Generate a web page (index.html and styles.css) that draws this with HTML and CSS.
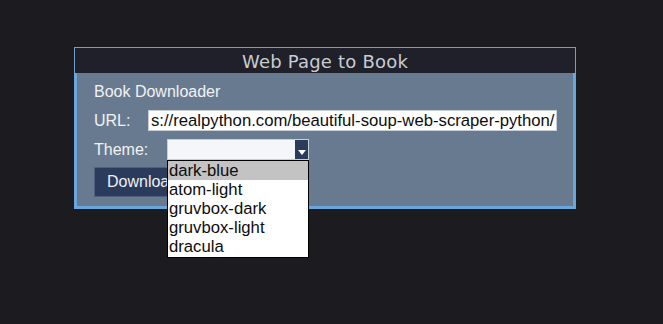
FILE: index.html
```html
<!DOCTYPE html>
<html>
<head>
<meta charset="utf-8">
<link rel="stylesheet" href="styles.css">
</head>
<body>
<div class="window">
  <div class="titlebar">Web Page to Book</div>
  <div class="content">
    <div class="heading">Book Downloader</div>
    <div class="row url-row">
      <span class="label url-label">URL:</span>
      <div class="entry">s://realpython.com/beautiful-soup-web-scraper-python/</div>
    </div>
    <div class="row theme-row">
      <span class="label theme-label">Theme:</span>
      <div class="combo">
        <div class="combo-field"></div>
        <div class="combo-btn"><span class="arrow"></span></div>
        <ul class="listbox">
          <li class="selected">dark-blue</li>
          <li>atom-light</li>
          <li>gruvbox-dark</li>
          <li>gruvbox-light</li>
          <li>dracula</li>
        </ul>
      </div>
    </div>
    <div class="btn-row">
      <div class="button">Download</div>
    </div>
  </div>
</div>
</body>
</html>
```
FILE: styles.css
```css
html, body {
  margin: 0;
  padding: 0;
  background: #1c1b20;
  width: 663px;
  height: 324px;
  overflow: hidden;
}
body {
  padding: 47px 0 0 74px;
  box-sizing: border-box;
  font-family: "Liberation Sans", Arial, sans-serif;
}
.window {
  width: 502px;
  box-sizing: border-box;
}
.titlebar {
  height: 26px;
  background: #1f2029;
  border: 1px solid #6f9fcc;
  border-bottom: none;
  box-sizing: border-box;
  color: #c9ccd3;
  font-family: "DejaVu Sans", sans-serif;
  font-size: 18px;
  line-height: 27px;
  text-align: center;
  letter-spacing: 0.2px;
}
.content {
  background: #687a90;
  border: 3px solid #6aa6dc;
  border-top: none;
  height: 136px;
  box-sizing: border-box;
  padding: 8px 0 0 17px;
  color: #f2f2f2;
  font-size: 16px;
}
.heading {
  height: 21px;
  line-height: 21px;
}
.row {
  display: flex;
  align-items: center;
}
.url-row {
  margin-top: 8px;
  height: 21px;
}
.label {
  line-height: 20px;
}
.url-label {
  width: 54px;
}
.theme-label {
  width: 73px;
}
.entry {
  width: 409px;
  height: 21px;
  box-sizing: border-box;
  background: #ffffff;
  border: 1px solid #c8ced6;
  color: #0d0d0d;
  font-size: 16.7px;
  line-height: 20px;
  padding-left: 2px;
  overflow: hidden;
  white-space: nowrap;
}
.theme-row {
  margin-top: 8px;
  height: 21px;
}
.combo {
  position: relative;
  display: flex;
  width: 142px;
  height: 21px;
}
.combo-field {
  flex: 1;
  background: #f4f6fa;
  border: 1px solid #c9ced6;
  border-right: none;
}
.combo-btn {
  width: 13px;
  background: #2b3b5c;
  border: 1px solid #c9ced6;
  border-left: none;
  position: relative;
}
.arrow {
  position: absolute;
  left: 3px;
  bottom: 4px;
  width: 0;
  height: 0;
  border-left: 4px solid transparent;
  border-right: 4px solid transparent;
  border-top: 5px solid #ffffff;
}
.listbox {
  position: absolute;
  left: 0;
  top: 21px;
  width: 142px;
  height: 98px;
  box-sizing: border-box;
  margin: 0;
  padding: 0;
  list-style: none;
  background: #ffffff;
  border: 1px solid #000;
  z-index: 5;
  font-size: 16.7px;
  color: #0d0d0d;
}
.listbox li {
  height: 19px;
  line-height: 19px;
  padding-left: 1px;
}
.listbox li.selected {
  background: #c3c3c3;
}
.btn-row {
  margin-top: 7px;
}
.button {
  display: inline-block;
  background: #2b3b5c;
  color: #eef0f4;
  border: 1px solid #4e607d;
  height: 30px;
  box-sizing: border-box;
  line-height: 28px;
  padding: 0 12px;
  font-size: 16px;
}
```
